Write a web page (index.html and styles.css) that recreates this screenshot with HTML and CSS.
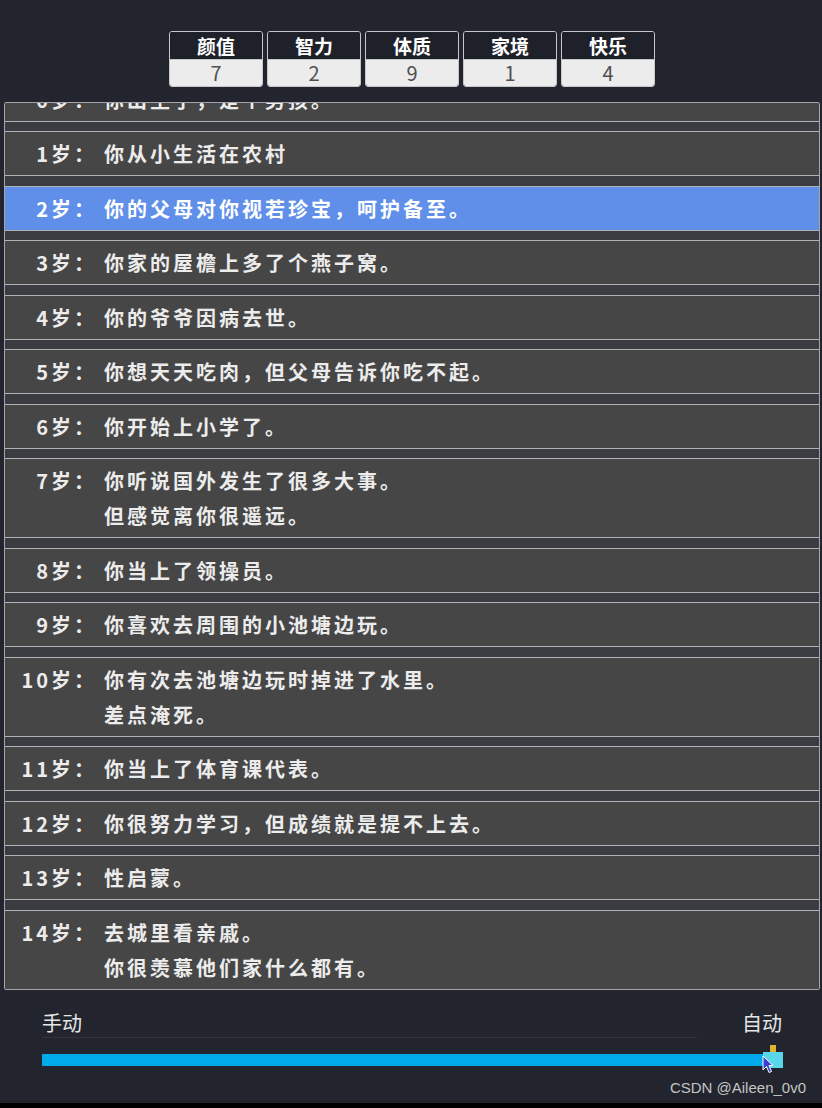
FILE: index.html
```
<!DOCTYPE html>
<html lang="zh-CN">
<head>
    <meta charset="UTF-8">
    <meta name="viewport" content="width=device-width, initial-scale=1.0">
    <title>人生重开</title>
    <link rel="stylesheet" href="styles.css">
</head>
<body>
    <div class="page">
        <!-- attributes -->
        <div class="stats">
            <div class="stat"><div class="stat-name">颜值</div><div class="stat-value">7</div></div>
            <div class="stat"><div class="stat-name">智力</div><div class="stat-value">2</div></div>
            <div class="stat"><div class="stat-name">体质</div><div class="stat-value">9</div></div>
            <div class="stat"><div class="stat-name">家境</div><div class="stat-value">1</div></div>
            <div class="stat"><div class="stat-name">快乐</div><div class="stat-value">4</div></div>
        </div>

        <!-- life events, scrolled a little -->
        <div class="story">
            <ul class="story-list">
                <li class="story-item"><span class="age">0岁：</span><span class="text">你出生了，是个男孩。</span></li>
                <li class="story-item"><span class="age">1岁：</span><span class="text">你从小生活在农村</span></li>
                <li class="story-item active"><span class="age">2岁：</span><span class="text">你的父母对你视若珍宝，呵护备至。</span></li>
                <li class="story-item"><span class="age">3岁：</span><span class="text">你家的屋檐上多了个燕子窝。</span></li>
                <li class="story-item"><span class="age">4岁：</span><span class="text">你的爷爷因病去世。</span></li>
                <li class="story-item"><span class="age">5岁：</span><span class="text">你想天天吃肉，但父母告诉你吃不起。</span></li>
                <li class="story-item"><span class="age">6岁：</span><span class="text">你开始上小学了。</span></li>
                <li class="story-item"><span class="age">7岁：</span><span class="text">你听说国外发生了很多大事。<br>但感觉离你很遥远。</span></li>
                <li class="story-item"><span class="age">8岁：</span><span class="text">你当上了领操员。</span></li>
                <li class="story-item"><span class="age">9岁：</span><span class="text">你喜欢去周围的小池塘边玩。</span></li>
                <li class="story-item"><span class="age">10岁：</span><span class="text">你有次去池塘边玩时掉进了水里。<br>差点淹死。</span></li>
                <li class="story-item"><span class="age">11岁：</span><span class="text">你当上了体育课代表。</span></li>
                <li class="story-item"><span class="age">12岁：</span><span class="text">你很努力学习，但成绩就是提不上去。</span></li>
                <li class="story-item"><span class="age">13岁：</span><span class="text">性启蒙。</span></li>
                <li class="story-item"><span class="age">14岁：</span><span class="text">去城里看亲戚。<br>你很羡慕他们家什么都有。</span></li>
            </ul>
        </div>

        <!-- manual / auto switch -->
        <div class="mode">
            <div class="mode-labels"><span>手动</span><span>自动</span></div>
            <div class="mode-line"></div>
            <div class="slider">
                <div class="slider-thumb"></div>
                <svg class="cursor" width="12" height="19" viewBox="0 0 12 19">
                    <path d="M1 1 L1 15 L4.5 11.5 L7 17.5 L9.5 16.5 L7 10.5 L11 10.5 Z" fill="#3c3fd4" stroke="#ffffff" stroke-width="1"/>
                </svg>
            </div>
            <div class="credit">CSDN @Aileen_0v0</div>
        </div>
    </div>
</body>
</html>
```
FILE: styles.css
```
html, body {
    margin: 0;
    padding: 0;
    background: #000;
}
body {
    font-family: "Noto Sans CJK SC", "Noto Sans", sans-serif;
}
.page {
    height: 1103px;
    padding-top: 31px;
    box-sizing: border-box;
    background: #22252e;
}
.stats {
    display: flex;
    justify-content: center;
    gap: 4px;
    margin: 0 2px 0 4px;
}
.stat {
    width: 94px;
    box-sizing: border-box;
    border: 1px solid #c6c7ca;
    border-radius: 3px;
    overflow: hidden;
    text-align: center;
}
.stat-name {
    height: 27px;
    line-height: 27px;
    background: #1e2129;
    color: #fff;
    font-size: 19px;
    font-weight: bold;
    border-bottom: 1px solid #c6c7ca;
}
.stat-value {
    height: 26px;
    line-height: 26px;
    background: #ececec;
    color: #505050;
    font-size: 20px;
}
.story {
    margin: 15px 2px 0 4px;
    height: 886px;
    border: 1px solid #a3a5aa;
    border-radius: 2px;
    background: #3a3c42;
    overflow: hidden;
}
.story-list {
    list-style: none;
    margin: -26.5px 0 0;
    padding: 0;
}
.story-item {
    display: flex;
    padding: 4px 0;
    margin-bottom: 9.5px;
    background: #464646;
    border-top: 1px solid #b0b2b6;
    border-bottom: 1px solid #b0b2b6;
    color: #ececec;
    font-size: 20px;
    font-weight: bold;
    line-height: 35px;
    letter-spacing: 3px;
}
.story-item.active {
    background: #5f8fe8;
    color: #fff;
}
.age {
    width: 92px;
    margin-right: 7px;
    text-align: right;
    flex-shrink: 0;
}
.mode {
    padding: 19px 40px 0 42px;
}
.mode-labels {
    display: flex;
    justify-content: space-between;
    color: #e6e6e6;
    font-size: 20px;
    line-height: 28px;
}
.mode-line {
    height: 1px;
    margin-right: 85px;
    background: #30333b;
}
.slider {
    position: relative;
    height: 12px;
    margin-top: 16px;
    background: #00aaea;
}
.slider-thumb {
    position: absolute;
    right: -1px;
    top: -2px;
    width: 20px;
    height: 16px;
    background: #5ad6ea;
}
.slider-thumb::before {
    content: "";
    position: absolute;
    left: 7px;
    top: -7px;
    width: 6px;
    height: 7px;
    background: #e2b231;
}
.cursor {
    position: absolute;
    left: 720px;
    top: 1px;
}
.credit {
    margin: 12px -24px 0 0;
    text-align: right;
    color: #c4c4c4;
    font-family: "Liberation Sans", Arial, sans-serif;
    font-size: 15px;
    line-height: 20px;
}
```
